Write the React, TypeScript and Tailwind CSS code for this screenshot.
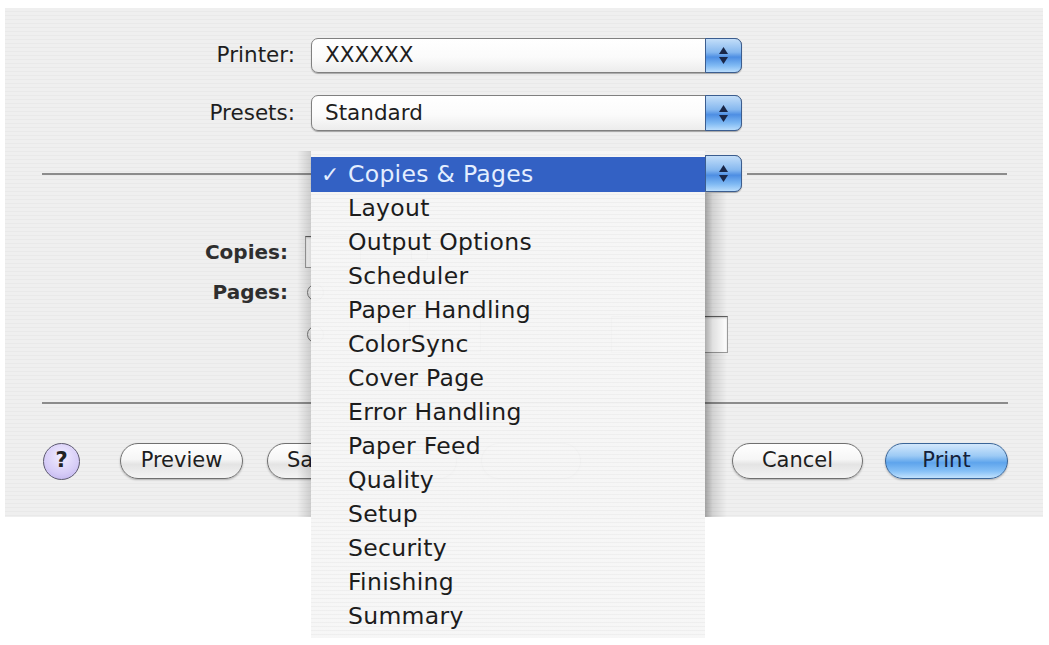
import clsx from "clsx";

const sheetItems = [
  "Layout",
  "Output Options",
  "Scheduler",
  "Paper Handling",
  "ColorSync",
  "Cover Page",
  "Error Handling",
  "Paper Feed",
  "Quality",
  "Setup",
  "Security",
  "Finishing",
  "Summary",
];

function Stepper() {
  return (
    <div className="-my-px -mr-px w-[37px] shrink-0 rounded-r-[7px] border border-[#3b5d8f] bg-[linear-gradient(180deg,#c3def9_0%,#86b8ef_40%,#4d8ee3_55%,#7fb9f3_80%,#b8dcfc_100%)] flex flex-col items-center justify-center gap-[3px]">
      <svg width="9" height="7" viewBox="0 0 9 7">
        <path d="M4.5 0L9 7H0Z" fill="#1a2748" />
      </svg>
      <svg width="9" height="7" viewBox="0 0 9 7">
        <path d="M0 0H9L4.5 7Z" fill="#1a2748" />
      </svg>
    </div>
  );
}

function Popup({ value, className }: { value?: string; className?: string }) {
  return (
    <div
      className={clsx(
        "flex rounded-[7px] border border-[#808080] shadow-[0_1px_1px_rgba(0,0,0,0.3)] bg-[linear-gradient(180deg,#ffffff_0%,#fbfbfb_55%,#ececec_100%)]",
        className
      )}
    >
      <div className="flex-1 flex items-center pl-[13px] text-[21.5px] text-[#1e1e1e]">
        {value}
      </div>
      <Stepper />
    </div>
  );
}

function PillButton({
  label,
  className,
  primary,
}: {
  label?: string;
  className?: string;
  primary?: boolean;
}) {
  return (
    <div
      className={clsx(
        "h-[36px] rounded-full border-[1.5px] flex items-center text-[21px] shadow-[0_1px_2px_rgba(0,0,0,0.25)]",
        primary
          ? "border-[#3a6598] text-[#14213a] bg-[linear-gradient(180deg,#d3e8fc_0%,#9ccaf5_35%,#5ea4ec_55%,#86c0f6_80%,#c2e2fd_100%)]"
          : "border-[#707070] text-[#1e1e1e] bg-[linear-gradient(180deg,#ffffff_0%,#f6f6f6_45%,#e4e4e4_60%,#f4f4f4_100%)]",
        className
      )}
    >
      {label}
    </div>
  );
}

function Field({ className }: { className?: string }) {
  return (
    <div
      className={clsx(
        "h-[34px] bg-white border border-[#9a9a9a] border-t-[#5e5e5e] shadow-[inset_0_1px_2px_rgba(0,0,0,0.2)]",
        className
      )}
    />
  );
}

function Radio() {
  return (
    <div className="w-[17px] h-[17px] rounded-full border border-[#777] bg-[linear-gradient(180deg,#ffffff,#e2e2e2)]" />
  );
}

export default function App() {
  return (
    <div className="relative w-[1049px] h-[645px] overflow-hidden bg-white font-['DejaVu_Sans','Liberation_Sans',sans-serif] text-[#1e1e1e]">
      {/* print sheet */}
      <div className="ml-[5px] mt-[8px] w-[1038px] h-[509px] flex flex-col bg-[repeating-linear-gradient(180deg,#efefef_0px,#efefef_3px,#e9e9e9_3px,#e9e9e9_4px)]">
        <div className="mt-[30px] h-[35px] flex items-center">
          <div className="w-[290px] text-right text-[21.5px]">Printer:</div>
          <Popup value="XXXXXX" className="ml-[16px] w-[431px] h-full" />
        </div>

        <div className="mt-[22px] h-[36px] flex items-center">
          <div className="w-[290px] text-right text-[21.5px]">Presets:</div>
          <Popup value="Standard" className="ml-[16px] w-[431px] h-full" />
        </div>

        {/* pane selector, its label sits under the open menu */}
        <div className="mt-[24px] h-[37px] flex items-center">
          <div className="ml-[37px] w-[269px] h-[2px] bg-[#8c8c8c]" />
          <Popup className="w-[431px] h-full" />
          <div className="ml-[5px] w-[260px] h-[2px] bg-[#8c8c8c]" />
        </div>

        <div className="mt-[44px] h-[32px] flex items-center">
          <div className="w-[283px] text-right text-[20px] font-bold text-[#2e2e2e]">Copies:</div>
          <Field className="ml-[17px] w-[56px] !h-[32px]" />
          <div className="ml-[50px] w-[17px] h-[17px] rounded-[3px] border border-[#777] bg-white" />
        </div>

        <div className="mt-[8px] h-[32px] flex items-center">
          <div className="w-[283px] text-right text-[20px] font-bold text-[#2e2e2e]">Pages:</div>
          <div className="ml-[19px]">
            <Radio />
          </div>
        </div>

        <div className="mt-[8px] h-[37px] flex items-center">
          <div className="ml-[302px]">
            <Radio />
          </div>
          <Field className="ml-[85px] w-[72px]" />
          <Field className="ml-[130px] w-[117px] !h-[37px]" />
        </div>

        <div className="mt-[49px] ml-[37px] w-[966px] h-[2px] bg-[#8c8c8c]" />

        <div className="mt-[39px] h-[36px] flex items-center">
          <div className="ml-[38px] w-[37px] h-[37px] rounded-full border-[1.5px] border-[#5d5a70] bg-[radial-gradient(circle_at_50%_35%,#f1edff_0%,#d6ccf7_60%,#b9acea_100%)] flex items-center justify-center text-[21px] font-bold text-[#222]">
            ?
          </div>
          <PillButton label="Preview" className="ml-[40px] w-[123px] justify-center" />
          <PillButton label="Sa" className="ml-[24px] w-[190px] pl-[19px]" />
          <PillButton className="ml-[24px] w-[100px]" />
          <PillButton label="Cancel" className="ml-auto w-[131px] justify-center" />
          <PillButton label="Print" primary className="ml-[22px] mr-[35px] w-[123px] justify-center" />
        </div>
      </div>

      {/* menu shadow over the sheet */}
      <div className="absolute left-[297px] top-[151px] w-[14px] h-[366px] bg-[linear-gradient(90deg,rgba(0,0,0,0)_0%,rgba(0,0,0,0.14)_100%)]" />
      <div className="absolute left-[705px] top-[193px] w-[22px] h-[324px] bg-[linear-gradient(90deg,rgba(0,0,0,0.32)_0%,rgba(0,0,0,0.12)_35%,rgba(0,0,0,0)_100%)]" />

      {/* open pane menu */}
      <div className="absolute left-[311px] top-[151px] w-[394px] h-[487px] pt-[6px] bg-[repeating-linear-gradient(180deg,rgba(246,246,246,0.97)_0px,rgba(246,246,246,0.97)_3px,rgba(238,238,238,0.97)_3px,rgba(238,238,238,0.97)_4px)]">
        <div className="relative h-[35px] flex items-center pl-[37px] bg-[#3361c4] text-[23.5px] tracking-[0.3px] text-[#e4eeff]">
          <span className="absolute left-[10px] text-[22px] font-bold">✓</span>
          Copies &amp; Pages
        </div>
        {sheetItems.map((item) => (
          <div key={item} className="h-[34px] flex items-center pl-[37px] text-[23.5px] tracking-[0.3px] text-[#1c1c1c]">
            {item}
          </div>
        ))}
      </div>
    </div>
  );
}
